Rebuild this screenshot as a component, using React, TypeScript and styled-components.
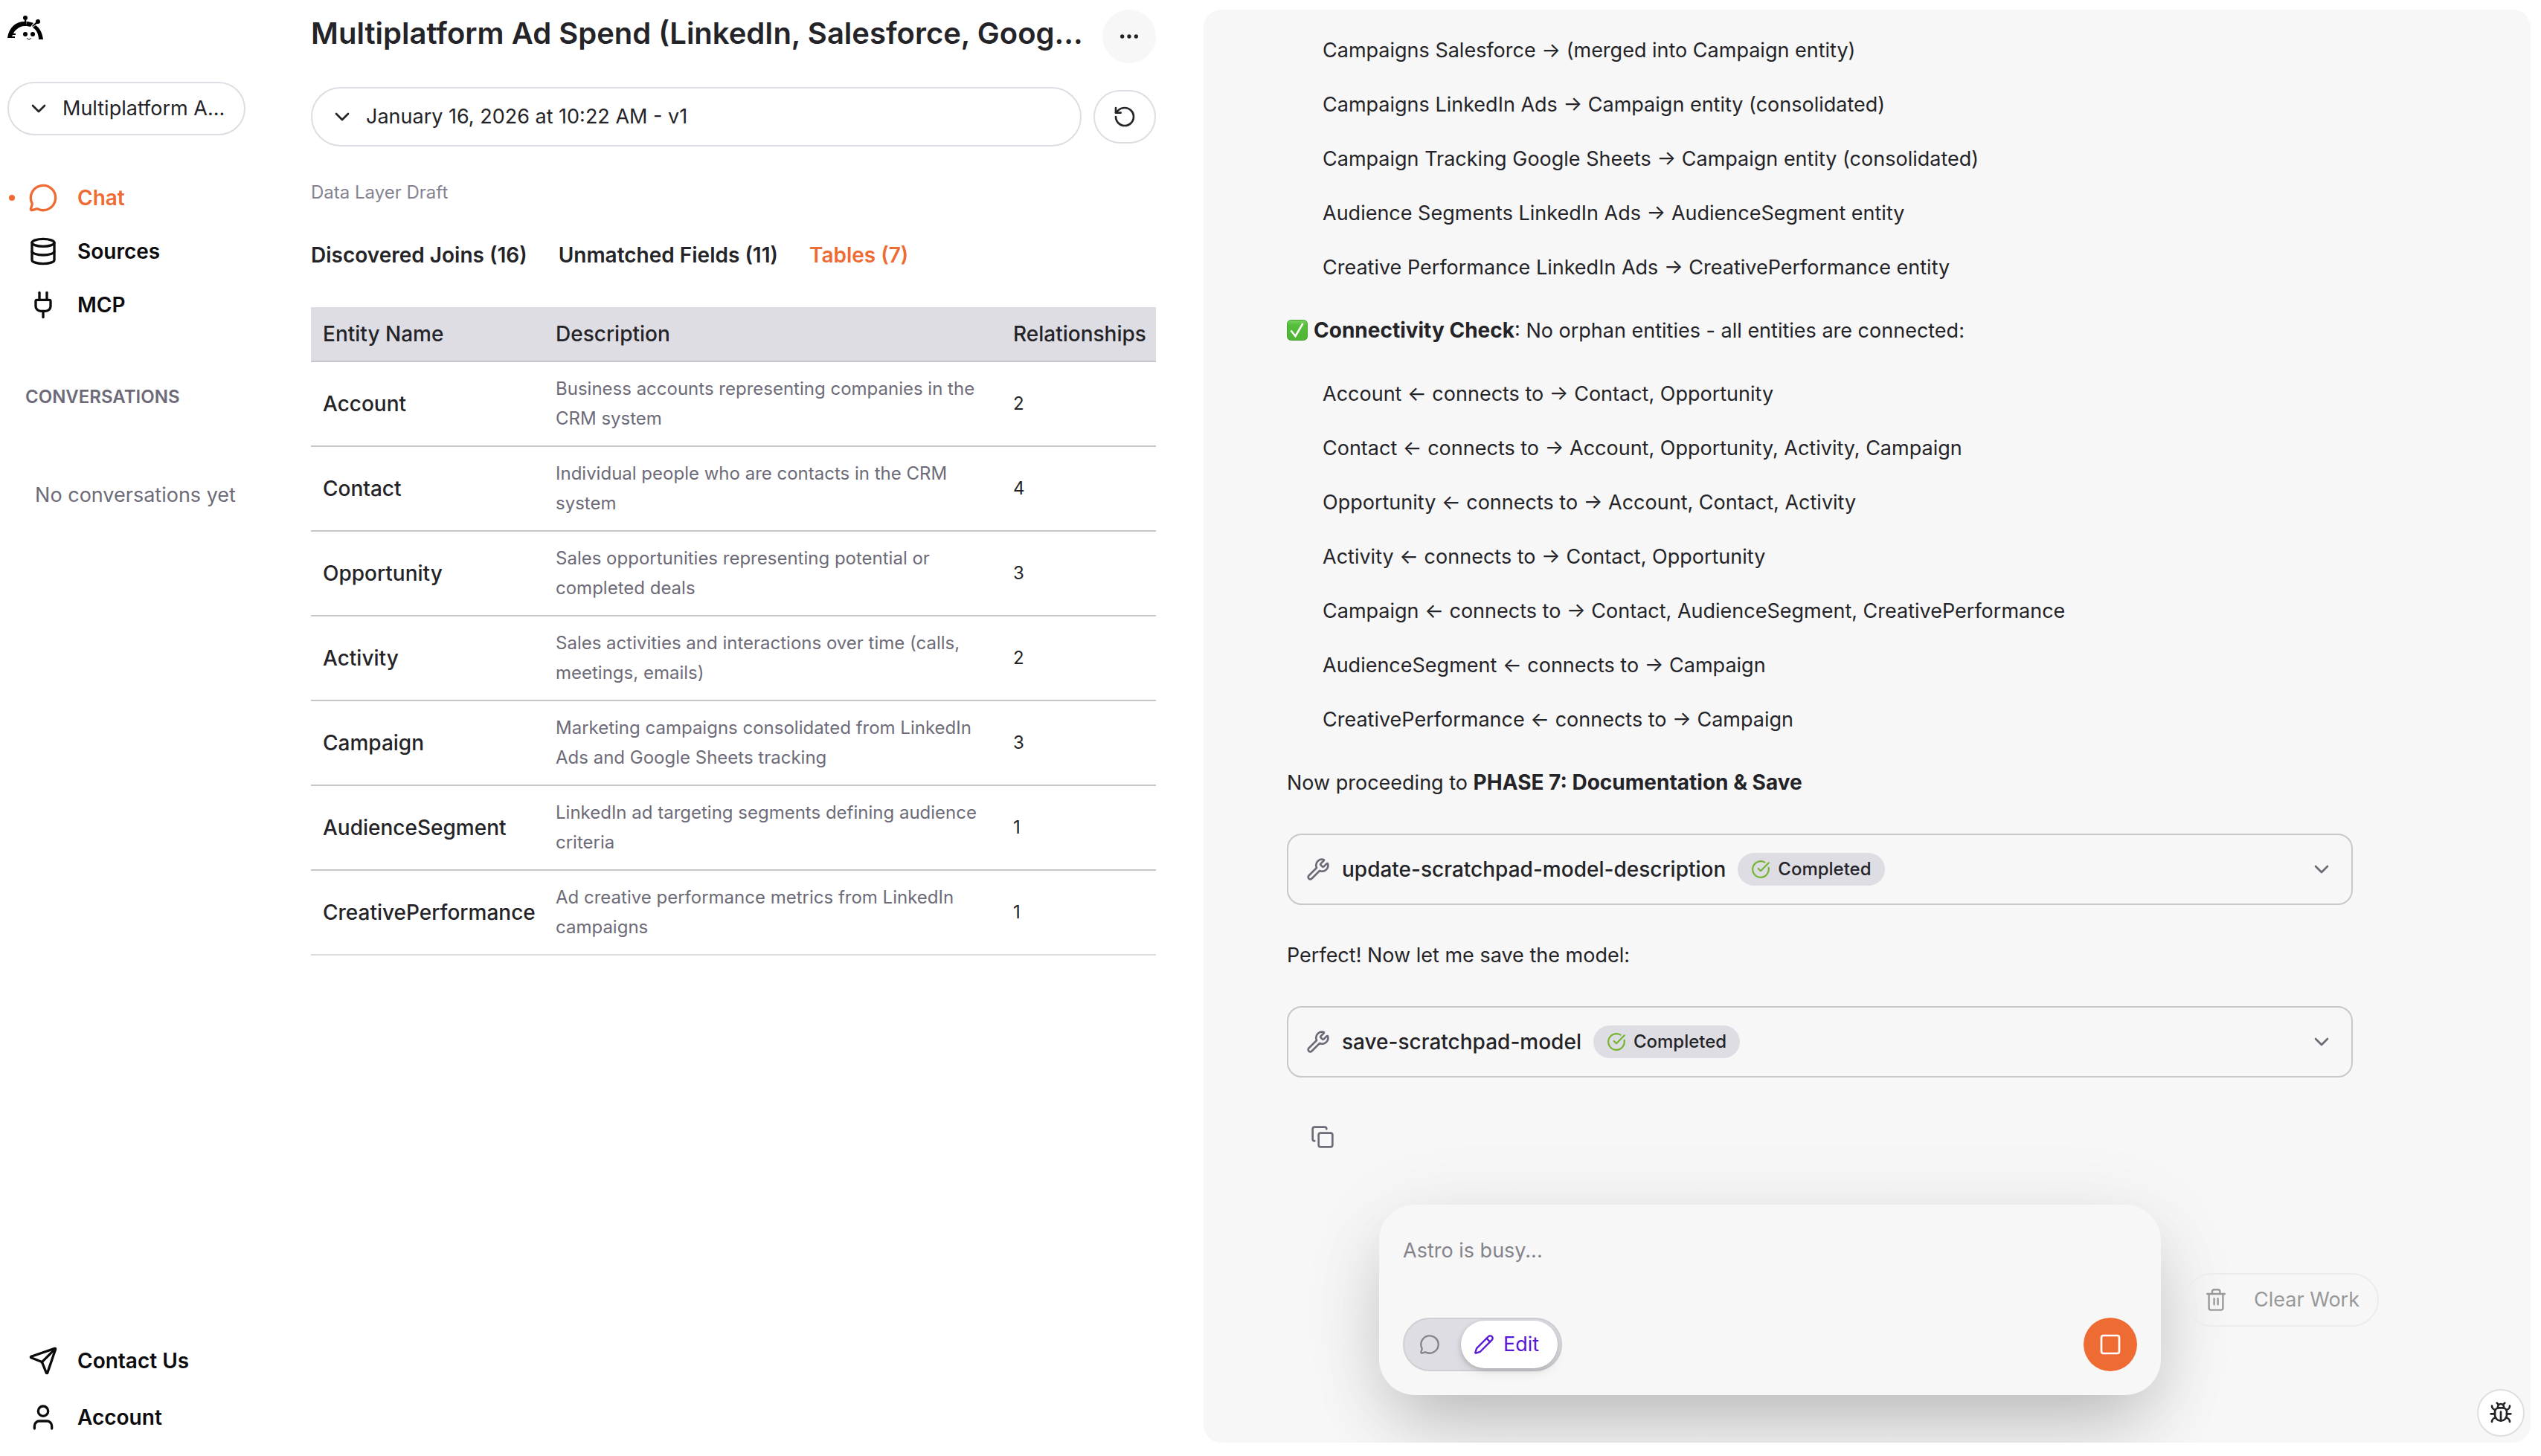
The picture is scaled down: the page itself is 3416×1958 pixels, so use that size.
import React from "react";
import styled, { createGlobalStyle, css } from "styled-components";
import {
  Bug,
  ChevronDown,
  CircleCheckBig,
  Copy,
  Database,
  Ellipsis,
  MessageCircle,
  Pencil,
  Plug,
  RotateCcw,
  Send,
  Square,
  User,
  Wrench,
} from "lucide-react";

const ink = "#242428";
const muted = "#6d6b78";
const line = "#dedde3";
const accent = "#ee6c34";
const panel = "#f7f7f7";

const GlobalStyle = createGlobalStyle`
  *, *::before, *::after { box-sizing: border-box; }
  html, body, #root { height: 100%; }
  body {
    margin: 0;
    background: #fff;
    color: ${ink};
    font-family: Inter, "Liberation Sans", sans-serif;
    font-size: 27px;
    line-height: 40px;
    -webkit-font-smoothing: antialiased;
  }
  button, select, textarea { font: inherit; color: inherit; }
  button { cursor: pointer; }
`;

const Page = styled.div`
  display: flex;
  height: 100%;
  overflow: hidden;
`;

const Sidebar = styled.aside`
  flex: none;
  width: 340px;
  padding: 20px 10px 14px;
  display: flex;
  flex-direction: column;
`;

const Logo = styled.a`
  display: block;
  width: 48px;
  height: 34px;
  margin-bottom: 56px;
  color: #000;
  svg { display: block; }
`;

const SelectBox = styled.div<{ $tall?: boolean }>`
  position: relative;
  flex: ${(p) => (p.$tall ? "1" : "none")};
  svg {
    position: absolute;
    left: 26px;
    top: 50%;
    transform: translateY(-50%);
    pointer-events: none;
  }
  select {
    appearance: none;
    display: block;
    width: 100%;
    height: ${(p) => (p.$tall ? "80px" : "72px")};
    padding: 0 20px 0 72px;
    border: 2px solid ${line};
    border-radius: 40px;
    background: transparent;
    outline: none;
  }
`;

const MainNav = styled.nav`
  margin-top: 48px;
`;

const FooterNav = styled.nav`
  margin-top: auto;
`;

const NavLink = styled.a<{ $active?: boolean; $tall?: boolean }>`
  position: relative;
  display: flex;
  align-items: center;
  gap: 26px;
  height: ${(p) => (p.$tall ? "76px" : "72px")};
  padding-left: 28px;
  color: ${(p) => (p.$active ? accent : "#0c0c0e")};
  font-size: 28px;
  font-weight: 600;
  text-decoration: none;
  ${(p) =>
    p.$active &&
    css`
      &::before {
        content: "";
        position: absolute;
        left: 2px;
        width: 8px;
        height: 8px;
        border-radius: 50%;
        background: ${accent};
      }
    `}
`;

const SectionLabel = styled.h2`
  margin: 68px 0 0;
  padding-left: 24px;
  color: ${muted};
  font-size: 24px;
  font-weight: 600;
`;

const EmptyNote = styled.p`
  margin: 92px 0 0;
  padding-left: 24px;
  text-align: center;
  color: ${muted};
`;

const Workspace = styled.main`
  flex: 0 1 1214px;
  min-width: 0;
  padding: 13px 0 0 78px;
`;

const TitleRow = styled.div`
  display: flex;
  align-items: flex-start;
  gap: 28px;
`;

const Title = styled.h1`
  flex: 1;
  min-width: 0;
  margin: 0;
  font-size: 40px;
  line-height: 64px;
  font-weight: 600;
  white-space: nowrap;
`;

const MoreButton = styled.button`
  flex: none;
  display: grid;
  place-items: center;
  width: 72px;
  height: 72px;
  border: 0;
  border-radius: 50%;
  background: ${panel};
`;

const VersionRow = styled.div`
  display: flex;
  align-items: center;
  gap: 16px;
  margin-top: 32px;
`;

const ResetButton = styled.button`
  display: grid;
  place-items: center;
  width: 84px;
  height: 72px;
  border: 2px solid ${line};
  border-radius: 36px;
  background: transparent;
`;

const Caption = styled.p`
  margin: 42px 0 0;
  color: #85838f;
  font-size: 24px;
`;

const Tabs = styled.div`
  display: flex;
  gap: 42px;
  margin-top: 44px;
`;

const Tab = styled.button<{ $active?: boolean }>`
  padding: 0;
  border: 0;
  background: none;
  font-size: 28px;
  font-weight: 600;
  color: ${(p) => (p.$active ? accent : ink)};
`;

const Table = styled.table`
  width: 100%;
  margin-top: 50px;
  border-collapse: separate;
  border-spacing: 0;
  table-layout: fixed;
  text-align: left;
  th {
    height: 74px;
    padding: 0 16px;
    background: ${line};
    border-bottom: 2px solid #c7c6cc;
    font-size: 28px;
    font-weight: 500;
  }
  td {
    height: 114px;
    padding: 0 16px;
    border-bottom: 2px solid #c7c7c9;
    font-size: 24px;
  }
  tbody tr:last-child td { border-color: #dcdcdf; }
  tbody td:nth-child(1) { font-size: 28px; font-weight: 500; white-space: nowrap; }
  tbody td:nth-child(2) { color: ${muted}; }
`;

const Chat = styled.section`
  position: relative;
  flex: 1 1 0;
  min-width: 0;
  margin: 13px 14px 18px 64px;
  border-radius: 24px;
  background: ${panel};
  overflow: hidden;
`;

const Thread = styled.div`
  padding: 30px 239px 0 112px;
`;

const List = styled.ul`
  list-style: none;
  margin: 0;
  padding: 0 0 0 48px;
`;

const Item = styled.li`
  line-height: 49px;
  & + & { margin-top: 24px; }
`;

const Para = styled.p`
  margin: 36px 0;
  line-height: 48px;
  strong { font-size: 28px; font-weight: 700; }
`;

const CheckMark = styled.svg`
  display: inline-block;
  vertical-align: -4px;
  margin-right: 8px;
`;

const Tool = styled.button`
  display: flex;
  align-items: center;
  width: 100%;
  height: 96px;
  margin: 44px 0;
  padding: 0 24px;
  border: 2px solid #c7c7cc;
  border-radius: 20px;
  background: transparent;
  text-align: left;
  > svg { color: ${muted}; }
`;

const ToolName = styled.span`
  margin: 0 16px;
  font-size: 28px;
  font-weight: 500;
`;

const Badge = styled.span`
  display: inline-flex;
  align-items: center;
  gap: 10px;
  height: 44px;
  margin-right: auto;
  padding: 0 18px;
  border-radius: 22px;
  background: ${line};
  font-size: 24px;
  font-weight: 500;
  svg { color: #74b530; }
`;

const CopyButton = styled.button`
  display: block;
  margin: 64px 0 0 32px;
  padding: 0;
  border: 0;
  background: none;
  color: ${muted};
  svg { display: block; }
`;

const Dock = styled.div`
  position: absolute;
  left: 236px;
  right: 204px;
  bottom: 64px;
  display: flex;
  align-items: center;
  gap: 32px;
`;

const Composer = styled.form`
  flex: 1;
  height: 256px;
  padding: 32px;
  border-radius: 48px;
  background: ${panel};
  box-shadow: 0 50px 100px -20px rgba(0, 0, 0, 0.22), 0 16px 120px rgba(0, 0, 0, 0.08);
  display: flex;
  flex-direction: column;
  justify-content: space-between;
`;

const Prompt = styled.textarea`
  display: block;
  width: 100%;
  height: 80px;
  padding: 10px 0;
  border: 0;
  outline: 0;
  resize: none;
  background: transparent;
  &::placeholder { color: #85838b; opacity: 1; }
`;

const Actions = styled.div`
  display: flex;
  align-items: center;
  justify-content: space-between;
`;

const ModeSwitch = styled.div`
  display: flex;
  align-items: center;
  justify-content: space-between;
  width: 214px;
  height: 72px;
  padding-right: 4px;
  border: 2px solid #d0d0d4;
  border-radius: 36px;
  background: ${line};
`;

const ModeButton = styled.button<{ $on?: boolean }>`
  display: flex;
  align-items: center;
  justify-content: center;
  gap: 12px;
  width: ${(p) => (p.$on ? "130px" : "68px")};
  height: 64px;
  padding: ${(p) => (p.$on ? "0 8px 0 0" : "0")};
  border: 0;
  border-radius: 32px;
  background: ${(p) => (p.$on ? "#fff" : "none")};
  color: ${(p) => (p.$on ? "#5717d4" : "#858489")};
  box-shadow: ${(p) => (p.$on ? "0 2px 6px rgba(0, 0, 0, 0.2), 0 8px 16px rgba(0, 0, 0, 0.06)" : "none")};
`;

const StopButton = styled.button`
  display: grid;
  place-items: center;
  width: 72px;
  height: 72px;
  border: 0;
  border-radius: 50%;
  background: ${accent};
  color: #fff;
`;

const ClearButton = styled.button`
  display: flex;
  align-items: center;
  justify-content: space-between;
  width: 261px;
  height: 72px;
  padding: 0 24px 0 27px;
  border: 2px solid #ececec;
  border-radius: 36px;
  background: transparent;
  color: #999;
`;

const BugButton = styled.button`
  position: fixed;
  right: 22px;
  bottom: 26px;
  display: grid;
  place-items: center;
  width: 64px;
  height: 64px;
  border: 2px solid #dfdfe2;
  border-radius: 50%;
  background: #fff;
`;

const entities = [
  ["Account", "Business accounts representing companies in the CRM system", 2],
  ["Contact", "Individual people who are contacts in the CRM system", 4],
  ["Opportunity", "Sales opportunities representing potential or completed deals", 3],
  ["Activity", "Sales activities and interactions over time (calls, meetings, emails)", 2],
  ["Campaign", "Marketing campaigns consolidated from LinkedIn Ads and Google Sheets tracking", 3],
  ["AudienceSegment", "LinkedIn ad targeting segments defining audience criteria", 1],
  ["CreativePerformance", "Ad creative performance metrics from LinkedIn campaigns", 1],
];

const mappings = [
  "Campaigns Salesforce → (merged into Campaign entity)",
  "Campaigns LinkedIn Ads → Campaign entity (consolidated)",
  "Campaign Tracking Google Sheets → Campaign entity (consolidated)",
  "Audience Segments LinkedIn Ads → AudienceSegment entity",
  "Creative Performance LinkedIn Ads → CreativePerformance entity",
];

const connections = [
  "Account ← connects to → Contact, Opportunity",
  "Contact ← connects to → Account, Opportunity, Activity, Campaign",
  "Opportunity ← connects to → Account, Contact, Activity",
  "Activity ← connects to → Contact, Opportunity",
  "Campaign ← connects to → Contact, AudienceSegment, CreativePerformance",
  "AudienceSegment ← connects to → Campaign",
  "CreativePerformance ← connects to → Campaign",
];

function ToolCall({ name }: { name: string }) {
  return (
    <Tool type="button">
      <Wrench size={32} />
      <ToolName>{name}</ToolName>
      <Badge>
        <CircleCheckBig size={26} />
        Completed
      </Badge>
      <ChevronDown size={32} />
    </Tool>
  );
}

function TrashIcon() {
  return (
    <svg
      width="26"
      height="30"
      viewBox="0 0 26 30"
      fill="none"
      stroke="currentColor"
      strokeWidth="2.4"
      strokeLinecap="round"
      strokeLinejoin="round"
    >
      <path d="M1.2 7h23.6M3.6 7v19a2.6 2.6 0 0 0 2.6 2.6h13.6a2.6 2.6 0 0 0 2.6-2.6V7" />
      <path d="M8 7V3.8A2.6 2.6 0 0 1 10.600 1.200h5.200A2.600 2.600 0 0 1 18.400 3.800V7M10.600 13.200v8M15.600 13.200v8" />
    </svg>
  );
}

function RobotLogo() {
  return (
    <svg width="48" height="34" viewBox="0 0 48 34" fill="currentColor">
      <path d="M0 31C2 17 11 9 23 9V15C19 15 15 17 13 19C10 21 9 23 8 25H11V27H7L6 29H10V31Z" />
      <path d="M26 9C29 9 32 10 35 11L31 16L26 15Z" />
      <path d="M38 14C44 18 47 25 48 33H42C42 26 39 20 34 17Z" />
      <circle cx="24" cy="4" r="3" />
      <path d="M23 4h2l1 11h-3z" />
      <circle cx="41" cy="9" r="3" />
      <path d="M40 8l2 2-8 6-1-1z" />
      <circle cx="24" cy="26" r="3" />
      <circle cx="34" cy="26" r="3" />
      <path d="M26 31q3 4 6 0" fill="none" stroke="currentColor" strokeWidth="1" />
    </svg>
  );
}

export default function App() {
  return (
    <>
      <GlobalStyle />
      <Page>
        <Sidebar>
          <Logo href="#" aria-label="Home">
            <RobotLogo />
          </Logo>
          <SelectBox>
            <ChevronDown size={32} />
            <select aria-label="Project">
              <option>Multiplatform A...</option>
            </select>
          </SelectBox>
          <MainNav>
            <NavLink href="#chat" $active>
              <MessageCircle size={40} />
              Chat
            </NavLink>
            <NavLink href="#sources">
              <Database size={40} />
              Sources
            </NavLink>
            <NavLink href="#mcp">
              <Plug size={40} />
              MCP
            </NavLink>
          </MainNav>
          <SectionLabel>CONVERSATIONS</SectionLabel>
          <EmptyNote>No conversations yet</EmptyNote>
          <FooterNav>
            <NavLink href="#contact" $tall>
              <Send size={40} />
              Contact Us
            </NavLink>
            <NavLink href="#account" $tall>
              <User size={40} />
              Account
            </NavLink>
          </FooterNav>
        </Sidebar>

        <Workspace>
          <TitleRow>
            <Title>Multiplatform Ad Spend (LinkedIn, Salesforce, Goog…</Title>
            <MoreButton type="button" aria-label="More">
              <Ellipsis size={32} />
            </MoreButton>
          </TitleRow>
          <VersionRow>
            <SelectBox $tall>
              <ChevronDown size={32} />
              <select aria-label="Version">
                <option>January 16, 2026 at 10:22 AM - v1</option>
              </select>
            </SelectBox>
            <ResetButton type="button" aria-label="Restore">
              <RotateCcw size={32} />
            </ResetButton>
          </VersionRow>
          <Caption>Data Layer Draft</Caption>
          <Tabs role="tablist">
            <Tab role="tab">Discovered Joins (16)</Tab>
            <Tab role="tab">Unmatched Fields (11)</Tab>
            <Tab role="tab" $active aria-selected>
              Tables (7)
            </Tab>
          </Tabs>
          <Table>
            <colgroup>
              <col width="313" />
              <col />
              <col width="208" />
            </colgroup>
            <thead>
              <tr>
                <th scope="col">Entity Name</th>
                <th scope="col">Description</th>
                <th scope="col">Relationships</th>
              </tr>
            </thead>
            <tbody>
              {entities.map(([name, description, count]) => (
                <tr key={name}>
                  <td>{name}</td>
                  <td>{description}</td>
                  <td>{count}</td>
                </tr>
              ))}
            </tbody>
          </Table>
        </Workspace>

        <Chat>
          <Thread>
            <List>
              {mappings.map((text) => (
                <Item key={text}>{text}</Item>
              ))}
            </List>
            <Para>
              <CheckMark width="28" height="28" viewBox="0 0 28 28">
                <defs>
                  <linearGradient id="tick" x1="0" y1="0" x2="0" y2="1">
                    <stop offset="0" stopColor="#7ad45f" />
                    <stop offset="0.25" stopColor="#55be3b" />
                    <stop offset="1" stopColor="#4fb535" />
                  </linearGradient>
                </defs>
                <rect x="0.5" y="0.5" width="27" height="27" rx="5" fill="url(#tick)" stroke="#47a030" strokeWidth="1" />
                <path d="M5.500 14.500l6 7.500L21.500 5" fill="none" stroke="#fff" strokeWidth="2.500" />
              </CheckMark>
              <strong>Connectivity Check</strong>: No orphan entities - all entities are connected:
            </Para>
            <List>
              {connections.map((text) => (
                <Item key={text}>{text}</Item>
              ))}
            </List>
            <Para>
              Now proceeding to <strong>PHASE 7: Documentation &amp; Save</strong>
            </Para>
            <ToolCall name="update-scratchpad-model-description" />
            <Para>Perfect! Now let me save the model:</Para>
            <ToolCall name="save-scratchpad-model" />
            <CopyButton type="button" aria-label="Copy">
              <Copy size={32} />
            </CopyButton>
          </Thread>
          <Dock>
            <Composer>
              <Prompt aria-label="Message" placeholder="Astro is busy..." />
              <Actions>
                <ModeSwitch>
                  <ModeButton type="button" aria-label="Ask">
                    <MessageCircle size={28} />
                  </ModeButton>
                  <ModeButton type="button" $on>
                    <Pencil size={28} />
                    Edit
                  </ModeButton>
                </ModeSwitch>
                <StopButton type="button" aria-label="Stop">
                  <Square size={32} />
                </StopButton>
              </Actions>
            </Composer>
            <ClearButton type="button">
              <TrashIcon />
              Clear Work
            </ClearButton>
          </Dock>
        </Chat>
      </Page>
      <BugButton type="button" aria-label="Report a bug">
        <Bug size={32} />
      </BugButton>
    </>
  );
}
